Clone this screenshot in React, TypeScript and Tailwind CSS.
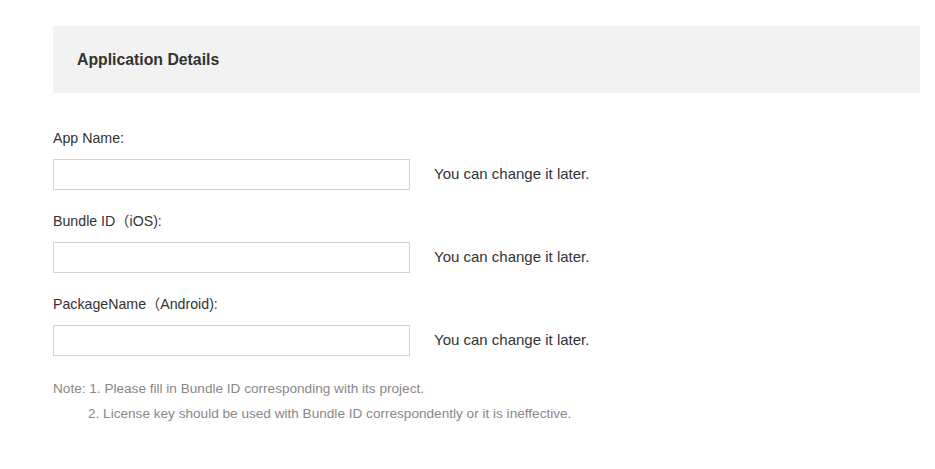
const fields = [
  { label: "App Name:" },
  { label: "Bundle ID（iOS):" },
  { label: "PackageName（Android):" },
];

const App = () => {
  return (
    <div
      className="min-h-screen bg-white pl-[53px] pr-[15px] pt-[26px] text-[#333]"
      style={{ fontFamily: '"Liberation Sans", Arial, "Noto Sans CJK SC", sans-serif' }}
    >
      <div className="flex h-[67px] items-center bg-[#f2f2f2] pl-6">
        <h2 className="text-[15.8px] font-bold text-[#333]">Application Details</h2>
      </div>
      <section className="mt-[35px] flex flex-col gap-[21px]">
        {fields.map((f) => (
          <div key={f.label} className="flex flex-col gap-[11px]">
            <label className="text-[14.2px] leading-5">{f.label}</label>
            <div className="flex items-center gap-6">
              <input
                type="text"
                className="h-[31px] w-[357px] border border-[#d4d4d4] bg-white px-2 text-[13px] outline-none"
              />
              <span className="text-[15px] text-[#333]">You can change it later.</span>
            </div>
          </div>
        ))}
      </section>
      <div className="mt-[23px] flex flex-col gap-[5px] text-[13.6px] leading-5 text-[#888]">
        <p>Note: 1. Please fill in Bundle ID corresponding with its project.</p>
        <p className="pl-[35px]">
          2. License key should be used with Bundle ID correspondently or it is ineffective.
        </p>
      </div>
    </div>
  );
};

export default App;
